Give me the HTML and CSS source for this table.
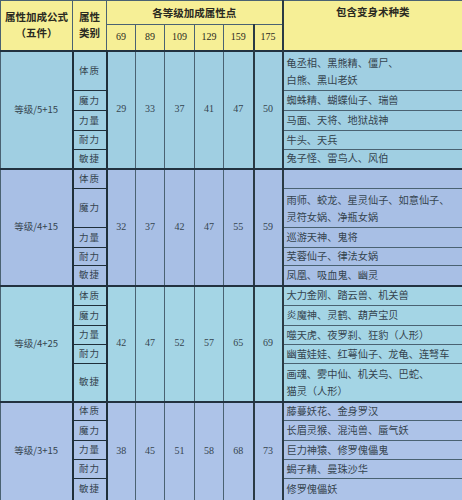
FILE: index.html
```html
<!DOCTYPE html>
<html lang="zh">
<head>
<meta charset="utf-8">
<link rel="stylesheet" href="styles.css">
</head>
<body>
<table class="grid">
  <colgroup>
    <col class="c-formula"><col class="c-attr">
    <col class="c-n29"><col class="c-n29"><col class="c-n30"><col class="c-n29"><col class="c-n30"><col class="c-n29">
    <col class="c-list">
  </colgroup>
  <thead>
    <tr class="h1">
      <th rowspan="2" class="hcell two-h">属性加成公式<br>（五件）</th>
      <th rowspan="2" class="hcell two-h">属性<br>类别</th>
      <th colspan="6" class="hcell thick-r">各等级加成属性点</th>
      <th rowspan="2" class="hcell top">包含变身术种类</th>
    </tr>
    <tr class="h2">
      <th class="lv">69</th><th class="lv">89</th><th class="lv">109</th><th class="lv">129</th><th class="lv thick-r">159</th><th class="lv thick-r">175</th>
    </tr>
  </thead>
  <tbody class="g1">
    <tr style="height:40px">
      <td rowspan="5" class="formula">等级/5+15</td>
      <td class="attr">体质</td>
      <td rowspan="5" class="num">29</td><td rowspan="5" class="num">33</td><td rowspan="5" class="num">37</td><td rowspan="5" class="num">41</td><td rowspan="5" class="num thick-r">47</td><td rowspan="5" class="num thick-r">50</td>
      <td class="list two">龟丞相、黑熊精、僵尸、<br>白熊、黑山老妖</td>
    </tr>
    <tr style="height:20px"><td class="attr">魔力</td><td class="list">蜘蛛精、蝴蝶仙子、瑞兽</td></tr>
    <tr style="height:20px"><td class="attr">力量</td><td class="list">马面、天将、地狱战神</td></tr>
    <tr style="height:19px"><td class="attr">耐力</td><td class="list">牛头、天兵</td></tr>
    <tr style="height:19px" class="last"><td class="attr">敏捷</td><td class="list">兔子怪、雷鸟人、风伯</td></tr>
  </tbody>
  <tbody class="g2">
    <tr style="height:20px">
      <td rowspan="5" class="formula">等级/4+15</td>
      <td class="attr">体质</td>
      <td rowspan="5" class="num">32</td><td rowspan="5" class="num">37</td><td rowspan="5" class="num">42</td><td rowspan="5" class="num">47</td><td rowspan="5" class="num thick-r">55</td><td rowspan="5" class="num thick-r">59</td>
      <td class="list"></td>
    </tr>
    <tr style="height:39px"><td class="attr">魔力</td><td class="list two">雨师、蛟龙、星灵仙子、如意仙子、<br>灵符女娲、净瓶女娲</td></tr>
    <tr style="height:20px"><td class="attr">力量</td><td class="list">巡游天神、鬼将</td></tr>
    <tr style="height:18px"><td class="attr">耐力</td><td class="list">芙蓉仙子、律法女娲</td></tr>
    <tr style="height:20px" class="last"><td class="attr">敏捷</td><td class="list">凤凰、吸血鬼、幽灵</td></tr>
  </tbody>
  <tbody class="g3">
    <tr style="height:20px">
      <td rowspan="5" class="formula">等级/4+25</td>
      <td class="attr">体质</td>
      <td rowspan="5" class="num">42</td><td rowspan="5" class="num">47</td><td rowspan="5" class="num">52</td><td rowspan="5" class="num">57</td><td rowspan="5" class="num thick-r">65</td><td rowspan="5" class="num thick-r">69</td>
      <td class="list">大力金刚、踏云兽、机关兽</td>
    </tr>
    <tr style="height:20px"><td class="attr">魔力</td><td class="list">炎魔神、灵鹤、葫芦宝贝</td></tr>
    <tr style="height:19px"><td class="attr">力量</td><td class="list">噬天虎、夜罗刹、狂豹（人形）</td></tr>
    <tr style="height:19px"><td class="attr">耐力</td><td class="list">幽萤娃娃、红萼仙子、龙龟、连弩车</td></tr>
    <tr style="height:38px" class="last"><td class="attr">敏捷</td><td class="list two">画魂、雾中仙、机关鸟、巴蛇、<br>猫灵（人形）</td></tr>
  </tbody>
  <tbody class="g4">
    <tr style="height:19px">
      <td rowspan="5" class="formula">等级/3+15</td>
      <td class="attr">体质</td>
      <td rowspan="5" class="num">38</td><td rowspan="5" class="num">45</td><td rowspan="5" class="num">51</td><td rowspan="5" class="num">58</td><td rowspan="5" class="num thick-r">68</td><td rowspan="5" class="num thick-r">73</td>
      <td class="list">藤蔓妖花、金身罗汉</td>
    </tr>
    <tr style="height:20px"><td class="attr">魔力</td><td class="list">长眉灵猴、混沌兽、蜃气妖</td></tr>
    <tr style="height:19px"><td class="attr">力量</td><td class="list">巨力神猿、修罗傀儡鬼</td></tr>
    <tr style="height:19px"><td class="attr">耐力</td><td class="list">蝎子精、曼珠沙华</td></tr>
    <tr style="height:22px" class="last"><td class="attr">敏捷</td><td class="list">修罗傀儡妖</td></tr>
  </tbody>
</table>
</body>
</html>
```

FILE: styles.css
```css
html, body {
  margin: 0;
  padding: 0;
  background: #a8c6e2;
}
body {
  width: 462px;
  height: 500px;
  overflow: hidden;
  font-family: "Noto Sans CJK SC", "Liberation Serif", serif;
  color: #35444f;
}
.grid {
  width: 462px;
  border-collapse: collapse;
  table-layout: fixed;
}
.c-formula { width: 72px; }
.c-attr { width: 34px; }
.c-n29 { width: 29px; }
.c-n30 { width: 30px; }
.c-list { width: 180px; }

.grid th, .grid td {
  padding: 0;
  border: 1px solid #4a6272;
  line-height: 1.25;
  overflow: hidden;
}
thead th {
  background: #f6ef96;
  color: #2a2a22;
  font-weight: bold;
  font-size: 10.5px;
  text-align: center;
  border-color: #30302a;
}
.h1 { height: 24px; }
.h2 { height: 26px; }
.hcell { line-height: 15px; }
.hcell.two-h { line-height: 16px; }
.hcell.top { vertical-align: top; padding-top: 4px; }
.lv {
  font-family: "Liberation Serif", serif;
  font-size: 10px;
  font-weight: normal;
  color: #2a2a22;
}
.thick-r { border-right: 2px solid #2a3a44 !important; }

tbody tr.last td,
tbody td[rowspan] { border-bottom: 2px solid #223240; }
tbody tr:first-child td { border-top: 2px solid #223240; }

.formula {
  text-align: center;
  font-size: 9.5px;
  border-right: 2px solid #1e2c36;
}
.attr {
  text-align: center;
  font-size: 9.5px;
  letter-spacing: 1px;
  border: 2px solid #1f2f3a !important;
  border-top-width: 1px !important;
  border-bottom-width: 1px !important;
}
tbody tr:first-child .attr { border-top-width: 2px !important; }
tbody tr.last .attr { border-bottom-width: 2px !important; }
.num {
  text-align: center;
  font-family: "Liberation Serif", serif;
  font-size: 10px;
  border-color: #5d7585;
}
.list {
  text-align: left;
  font-size: 10.2px;
  padding-left: 3px !important;
  line-height: 15px;
  border-left: 2px solid #223240 !important;
  border-color: #2a3a48;
}
.list.two { line-height: 17px; }

.g1 td { background: #a0cfe2; }
.g2 td { background: #a8bfe5; }
.g3 td { background: #a4d5e5; }
.g4 td { background: #adc3e8; }
```
